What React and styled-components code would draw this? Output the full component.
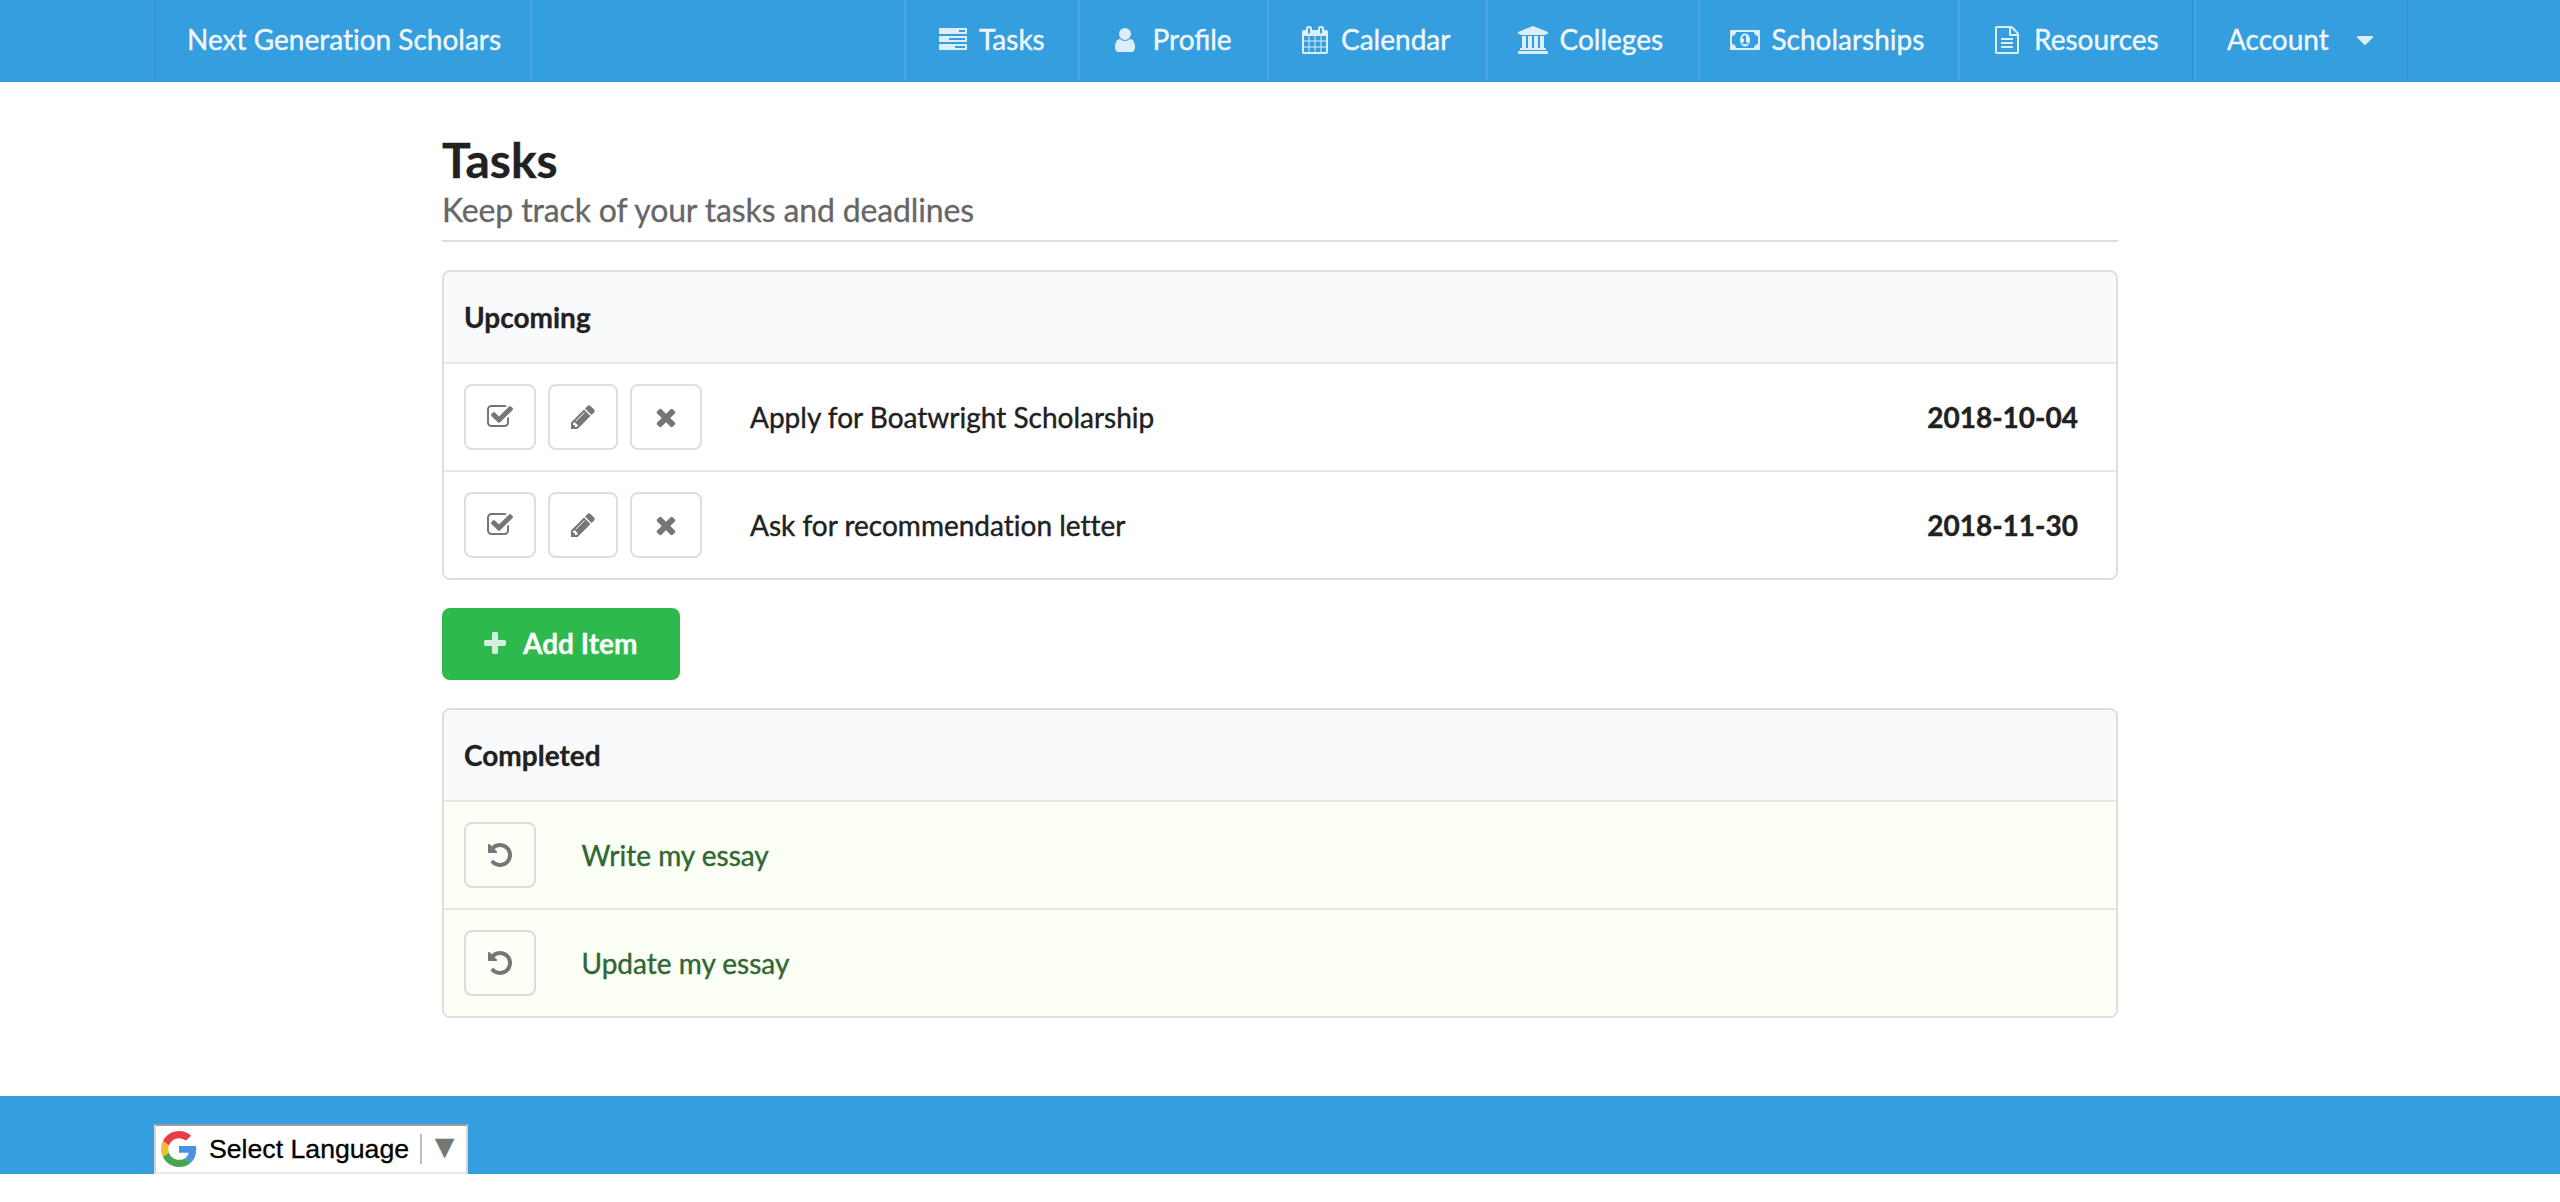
import React from "react";
import styled, { createGlobalStyle } from "styled-components";

const GlobalStyle = createGlobalStyle`
  *, *::before, *::after { box-sizing: border-box; }
  html, body { margin: 0; padding: 0; background: #fff; }
  body {
    font-family: Lato, "Liberation Sans", sans-serif;
    font-size: 28px;
    line-height: 1.2;
    font-variant-ligatures: no-common-ligatures;
    color: #212121;
  }
`;

const glyphs = {
  tasks: [1792, "M1024 1408h640v-128h-640v128zm-384-512h1024v-128h-1024v128zm640-512h384v-128h-384v128zm512 832v256q0 26-19 45t-45 19h-1664q-26 0-45-19t-19-45v-256q0-26 19-45t45-19h1664q26 0 45 19t19 45zm0-512v256q0 26-19 45t-45 19h-1664q-26 0-45-19t-19-45v-256q0-26 19-45t45-19h1664q26 0 45 19t19 45zm0-512v256q0 26-19 45t-45 19h-1664q-26 0-45-19t-19-45v-256q0-26 19-45t45-19h1664q26 0 45 19t19 45z"],
  user: [1792, "M1536 1399q0 109-62.5 187t-150.5 78h-854q-88 0-150.5-78t-62.5-187q0-85 8.5-160.5t31.5-152 58.5-131 94-89 134.5-34.5q131 128 313 128t313-128q76 0 134.5 34.5t94 89 58.5 131 31.5 152 8.5 160.5zm-256-887q0 159-112.5 271.5t-271.5 112.5-271.5-112.5-112.5-271.5 112.5-271.5 271.5-112.5 271.5 112.5 112.5 271.5z"],
  calendar: [1792, "M192 1664h288v-288h-288v288zm352 0h320v-288h-320v288zm-352-352h288v-320h-288v320zm352 0h320v-320h-320v320zm-352-384h288v-288h-288v288zm736 736h320v-288h-320v288zm-384-736h320v-288h-320v288zm768 736h288v-288h-288v288zm-384-352h320v-320h-320v320zm-352-864v-288q0-13-9.5-22.5t-22.5-9.5h-64q-13 0-22.5 9.5t-9.5 22.5v288q0 13 9.5 22.5t22.5 9.5h64q13 0 22.5-9.5t9.5-22.5zm736 864h288v-320h-288v320zm-384-384h320v-288h-320v288zm384 0h288v-288h-288v288zm32-480v-288q0-13-9.5-22.5t-22.5-9.5h-64q-13 0-22.5 9.5t-9.5 22.5v288q0 13 9.5 22.5t22.5 9.5h64q13 0 22.5-9.5t9.5-22.5zm384-64v1280q0 52-38 90t-90 38h-1408q-52 0-90-38t-38-90v-1280q0-52 38-90t90-38h128v-96q0-66 47-113t113-47h64q66 0 113 47t47 113v96h384v-96q0-66 47-113t113-47h64q66 0 113 47t47 113v96h128q52 0 90 38t38 90z"],
  university: [1920, "M960 0l960 384v128h-128q0 26-20.5 45t-48.5 19h-1526q-28 0-48.5-19t-20.5-45h-128v-128zm-704 640h256v768h128v-768h256v768h128v-768h256v768h128v-768h256v768h59q28 0 48.5 19t20.5 45v64h-1664v-64q0-26 20.5-45t48.5-19h59v-768zm1595 960q28 0 48.5 19t20.5 45v128h-1920v-128q0-26 20.5-45t48.5-19h1782z"],
  money: [1920, "M768 1152h384v-96h-128v-448h-114l-148 137 77 80q42-37 55-57h2v288h-128v96zm512-256q0 70-21 142t-59.5 134-101.5 101-138 39-138-39-101.5-101-59.5-134-21-142 21-142 59.5-134 101.5-101 138-39 138 39 101.5 101 59.5 134 21 142zm512 256v-512q-106 0-181-75t-75-181h-1152q0 106-75 181t-181 75v512q106 0 181 75t75 181h1152q0-106 75-181t181-75zm128-832v1152q0 26-19 45t-45 19h-1792q-26 0-45-19t-19-45v-1152q0-26 19-45t45-19h1792q26 0 45 19t19 45z"],
  file: [1792, "M1596 380q28 28 48 76t20 88v1152q0 40-28 68t-68 28h-1344q-40 0-68-28t-28-68v-1600q0-40 28-68t68-28h896q40 0 88 20t76 48zm-444-244v376h376q-10-29-22-41l-313-313q-12-12-41-22zm384 1528v-1024h-416q-40 0-68-28t-28-68v-416h-768v1536h1280zm-1024-864q0-14 9-23t23-9h704q14 0 23 9t9 23v64q0 14-9 23t-23 9h-704q-14 0-23-9t-9-23v-64zm736 224q14 0 23 9t9 23v64q0 14-9 23t-23 9h-704q-14 0-23-9t-9-23v-64q0-14 9-23t23-9h704zm0 256q14 0 23 9t9 23v64q0 14-9 23t-23 9h-704q-14 0-23-9t-9-23v-64q0-14 9-23t23-9h704z"],
  caret: [1024, "M1024 704q0 26-19 45l-448 448q-19 19-45 19t-45-19l-448-448q-19-19-19-45t19-45 45-19h896q26 0 45 19t19 45z"],
  check: [1792, "M1472 930v318q0 119-84.5 203.5t-203.5 84.5h-832q-119 0-203.5-84.5t-84.5-203.5v-832q0-119 84.5-203.5t203.5-84.5h832q63 0 117 25 15 7 18 23 3 17-9 29l-49 49q-10 10-23 10-3 0-9-2-23-6-45-6h-832q-66 0-113 47t-47 113v832q0 66 47 113t113 47h832q66 0 113-47t47-113v-254q0-13 9-22l64-64q10-10 23-10 6 0 12 3 20 8 20 29zm231-489l-814 814q-24 24-57 24t-57-24l-430-430q-24-24-24-57t24-57l110-110q24-24 57-24t57 24l263 263 647-647q24-24 57-24t57 24l110 110q24 24 24 57t-24 57z"],
  pencil: [1792, "M491 1536l91-91-235-235-91 91v107h128v128h107zm523-928q0-22-22-22-10 0-17 7l-542 542q-7 7-7 17 0 22 22 22 10 0 17-7l542-542q7-7 7-17zm-54-192l416 416-832 832h-416v-416zm683 96q0 53-37 90l-166 166-416-416 166-165q36-38 90-38 53 0 91 38l235 234q37 39 37 91z"],
  times: [1792, "M1490 1322q0 40-28 68l-136 136q-28 28-68 28t-68-28l-294-294-294 294q-28 28-68 28t-68-28l-136-136q-28-28-28-68t28-68l294-294-294-294q-28-28-28-68t28-68l136-136q28-28 68-28t68 28l294 294 294-294q28-28 68-28t68 28l136 136q28 28 28 68t-28 68l-294 294 294 294q28 28 28 68z"],
  plus: [1792, "M1600 736v192q0 40-28 68t-68 28h-416v416q0 40-28 68t-68 28h-192q-40 0-68-28t-28-68v-416h-416q-40 0-68-28t-28-68v-192q0-40 28-68t68-28h416v-416q0-40 28-68t68-28h192q40 0 68 28t28 68v416h416q40 0 68 28t28 68z"],
  undo: [1792, "M1664 896q0 156-61 298t-164 245-245 164-298 61q-172 0-327-72.5t-264-204.5q-7-10-6.5-22.5t8.5-20.5l137-138q10-9 25-9 16 2 23 12 73 95 179 147t225 52q104 0 198.5-40.5t163.5-109.5 109.5-163.5 40.5-198.5-40.5-198.5-109.5-163.5-163.5-109.5-198.5-40.5q-98 0-188 35.5t-160 101.5l137 138q31 30 14 69-17 40-59 40h-448q-26 0-45-19t-19-45v-448q0-42 40-59 39-17 69 14l130 129q107-101 244.5-156.5t284.5-55.5q156 0 298 61t245 164 164 245 61 298z"],
};

const Svg = styled.svg`
  display: block;
  height: 28px;
  width: auto;
  flex: none;
  fill: currentColor;
`;

function Icon({ name }) {
  const [width, d] = glyphs[name];
  return (
    <Svg viewBox={`0 0 ${width} 1792`} width={width / 64} height="28" aria-hidden="true">
      <path d={d} />
    </Svg>
  );
}

const Navbar = styled.nav`
  display: flex;
  justify-content: space-between;
  height: 82px;
  padding: 0 152px 2px 154px;
  background: #359ede;
  color: rgba(255, 255, 255, 0.92);
  -webkit-text-stroke: 0.5px rgba(255, 255, 255, 0.8);
`;

const Brand = styled.a`
  display: flex;
  align-items: center;
  width: 378px;
  padding-left: 31px;
  border-left: 2px solid #3294d0;
  border-right: 2px solid #46a7e1;
  white-space: nowrap;
`;

const Menu = styled.div`
  display: flex;
`;

const MenuItem = styled.a`
  display: flex;
  align-items: center;
  width: ${(p) => p.$width}px;
  padding-left: 30px;
  border-left: 2px solid #46a7e1;
  font-variant-ligatures: normal;
  white-space: nowrap;
`;

const MenuIcon = styled.span`
  display: flex;
  justify-content: center;
  width: 33px;
  margin-left: ${(p) => p.$start || 0}px;
  margin-right: ${(p) => p.$gap || 10}px;
  opacity: 0.9;
`;

const Account = styled(MenuItem)`
  padding-left: 31px;
  box-shadow: -2px 0 #3294d0;
  border-right: 2px solid #3294d0;
`;

const Caret = styled.span`
  margin-left: 28px;
  opacity: 0.9;
`;

const Page = styled.main`
  width: 1676px;
  margin: 0 auto;
  padding-top: 50px;
`;

const Header = styled.header`
  height: 110px;
  margin-bottom: 28px;
  border-bottom: 2px solid #dededf;
`;

const Title = styled.h1`
  margin: 0;
  font-size: 48px;
  line-height: 56px;
  font-weight: 700;
  -webkit-text-stroke: 0.3px;
`;

const Subtitle = styled.p`
  margin: 0;
  font-size: 32px;
  line-height: 44px;
  letter-spacing: -0.14px;
  color: #666;
  -webkit-text-stroke: 0.3px;
`;

const Table = styled.section`
  border: 2px solid #dededf;
  border-radius: 8px;
  overflow: hidden;
`;

const TableHead = styled.h2`
  display: flex;
  align-items: center;
  height: 90px;
  margin: 0;
  padding: 2px 20px 0;
  background: #f9fafc;
  font-size: 28px;
  font-weight: 700;
  -webkit-text-stroke: 0.3px;
`;

const Row = styled.div`
  display: flex;
  align-items: center;
  height: 108px;
  padding: 0 38px 0 20px;
  border-top: 2px solid ${(p) => (p.$positive ? "#e4e7e0" : "#e6e6e6")};
  background: ${(p) => (p.$positive ? "#fcfff5" : "#fff")};
  color: ${(p) => (p.$positive ? "#306733" : "#212121")};
  -webkit-text-stroke: 0.4px;
`;

const Actions = styled.div`
  display: flex;
  gap: 12px;
  margin-right: ${(p) => p.$space}px;
`;

const IconButton = styled.button`
  display: flex;
  align-items: flex-start;
  justify-content: center;
  width: ${(p) => p.$width || 72}px;
  height: 66px;
  padding: 17px 1px 0 0;
  border: 2px solid rgba(34, 36, 38, 0.15);
  border-radius: 8px;
  background: transparent;
  color: #767676;
`;

const TaskName = styled.span`
  flex: 1;
  padding-top: 2px;
`;

const DueDate = styled.time`
  padding-top: 2px;
  font-weight: 700;
`;

const AddButton = styled.button`
  display: flex;
  align-items: center;
  gap: 12px;
  width: 238px;
  height: 72px;
  margin: 28px 0;
  padding: 0 0 0 36px;
  border: 0;
  border-radius: 8px;
  background: #2eb94c;
  color: #fff;
  font: 700 28px/1.2 Lato, sans-serif;
  -webkit-text-stroke: 0.3px;
`;

const AddIcon = styled.span`
  display: flex;
  justify-content: center;
  width: 33px;
  opacity: 0.8;
`;

const Footer = styled.footer`
  height: 78px;
  margin-top: 78px;
  padding: 28px 154px 0;
  background: #359ede;
`;

const LanguagePicker = styled.a`
  display: flex;
  align-items: center;
  width: 314px;
  height: 50px;
  padding-left: 5px;
  border: 2px solid #d5d5d5;
  border-top-color: #9b9b9b;
  border-bottom-color: #e8e8e8;
  background: #fff;
  color: #000;
  font: 26.67px/32px "Liberation Sans", Arial, sans-serif;
  -webkit-text-stroke: 0.3px;
  white-space: nowrap;
`;

const Logo = styled.svg`
  width: 36px;
  height: 36px;
  flex: none;
`;

const LanguageText = styled.span`
  width: 211px;
  margin-left: 12px;
`;

const Arrow = styled.span`
  height: 30px;
  padding-left: 13px;
  border-left: 2px solid #bbb;
  font: 25px/26px "DejaVu Sans", sans-serif;
  color: #767676;
`;

const menu = [
  { icon: "tasks", label: "Tasks", width: 174 },
  { icon: "user", label: "Profile", width: 188.5, start: -1.5, gap: 11 },
  { icon: "calendar", label: "Calendar", width: 219.5, start: -0.5 },
  { icon: "university", label: "Colleges", width: 212, start: -1.5 },
  { icon: "money", label: "Scholarships", width: 260, start: -1.5 },
  { icon: "file", label: "Resources", width: 236, gap: 11 },
];

const upcoming = [
  { name: "Apply for Boatwright Scholarship", due: "2018-10-04" },
  { name: "Ask for recommendation letter", due: "2018-11-30" },
];

const completed = ["Write my essay", "Update my essay"];

function GoogleLogo() {
  return (
    <Logo viewBox="0 0 48 48" aria-hidden="true">
      <path fill="#e63e44" d="M24 9.5c3.54 0 6.71 1.22 9.21 3.6l6.85-6.85C35.9 2.38 30.47 0 24 0 14.62 0 6.51 5.38 2.56 13.22l7.98 6.19C12.43 13.72 17.74 9.5 24 9.5z" />
      <path fill="#4b91e3" d="M46.98 24.55c0-1.57-.15-3.09-.38-4.55H24v9.02h12.94c-.58 2.96-2.26 5.48-4.78 7.18l7.73 6c4.51-4.18 7.09-10.36 7.09-17.65z" />
      <path fill="#f4bc32" d="M10.53 28.59c-.48-1.45-.76-2.99-.76-4.59s.27-3.14.76-4.59l-7.98-6.19C.92 16.46 0 20.12 0 24c0 3.88.92 7.54 2.56 10.78l7.97-6.19z" />
      <path fill="#47a453" d="M24 48c6.48 0 11.93-2.13 15.89-5.81l-7.73-6c-2.15 1.45-4.92 2.3-8.16 2.3-6.26 0-11.57-4.22-13.47-9.91l-7.98 6.19C6.51 42.62 14.62 48 24 48z" />
    </Logo>
  );
}

export default function App() {
  return (
    <>
      <GlobalStyle />
      <Navbar>
        <Brand>Next Generation Scholars</Brand>
        <Menu>
          {menu.map((item) => (
            <MenuItem key={item.label} $width={item.width}>
              <MenuIcon $start={item.start} $gap={item.gap}>
                <Icon name={item.icon} />
              </MenuIcon>
              {item.label}
            </MenuItem>
          ))}
          <Account $width={214}>
            Account
            <Caret>
              <Icon name="caret" />
            </Caret>
          </Account>
        </Menu>
      </Navbar>
      <Page>
        <Header>
          <Title>Tasks</Title>
          <Subtitle>Keep track of your tasks and deadlines</Subtitle>
        </Header>
        <Table>
          <TableHead>Upcoming</TableHead>
          {upcoming.map((task) => (
            <Row key={task.name}>
              <Actions $space={48}>
                <IconButton aria-label="Complete">
                  <Icon name="check" />
                </IconButton>
                <IconButton aria-label="Edit" $width={70}>
                  <Icon name="pencil" />
                </IconButton>
                <IconButton aria-label="Delete">
                  <Icon name="times" />
                </IconButton>
              </Actions>
              <TaskName>{task.name}</TaskName>
              <DueDate>{task.due}</DueDate>
            </Row>
          ))}
        </Table>
        <AddButton>
          <AddIcon>
            <Icon name="plus" />
          </AddIcon>
          Add Item
        </AddButton>
        <Table>
          <TableHead>Completed</TableHead>
          {completed.map((name) => (
            <Row key={name} $positive>
              <Actions $space={45.5}>
                <IconButton aria-label="Undo">
                  <Icon name="undo" />
                </IconButton>
              </Actions>
              <TaskName>{name}</TaskName>
            </Row>
          ))}
        </Table>
      </Page>
      <Footer>
        <LanguagePicker>
          <GoogleLogo />
          <LanguageText>Select Language</LanguageText>
          <Arrow>▼</Arrow>
        </LanguagePicker>
      </Footer>
    </>
  );
}
